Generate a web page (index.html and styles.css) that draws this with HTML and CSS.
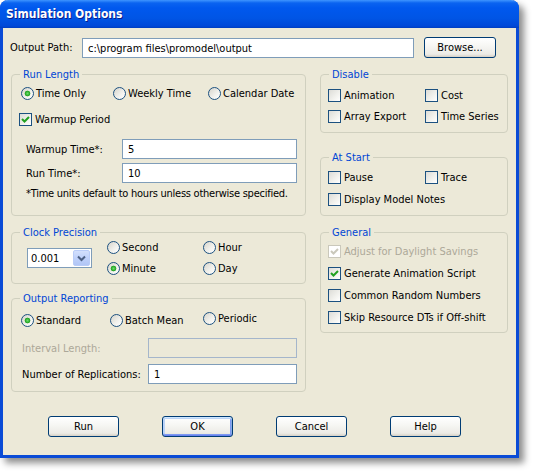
FILE: index.html
```html
<!DOCTYPE html>
<html>
<head>
<meta charset="utf-8">
<link rel="stylesheet" href="styles.css">
</head>
<body>
<div class="window">
  <div class="titlebar"><span class="title">Simulation Options</span></div>
  <div class="content">
    <div class="path-row">
      <span class="path-label">Output Path:</span>
      <input class="textbox path-input" type="text" value="c:\program files\promodel\output" readonly>
      <button class="btn browse">Browse...</button>
    </div>

    <div class="columns">
      <div class="col">
        <div class="group run-length">
          <div class="legend">Run Length</div>
          <div class="radio-row rl-radios">
            <span class="opt"><span class="radio on"></span>Time Only</span>
            <span class="opt"><span class="radio"></span>Weekly Time</span>
            <span class="opt"><span class="radio"></span>Calendar Date</span>
          </div>
          <div class="check-row warmup-row">
            <span class="opt"><span class="check on"><svg width="11" height="11" viewBox="0 0 11 11"><path d="M2 5 L4.5 7.5 L9 3" fill="none" stroke="#21A121" stroke-width="2"/></svg></span>Warmup Period</span>
          </div>
          <div class="field-row first-field">
            <span class="field-label">Warmup Time*:</span>
            <input class="textbox rl-input" type="text" value="5" readonly>
          </div>
          <div class="field-row">
            <span class="field-label">Run Time*:</span>
            <input class="textbox rl-input" type="text" value="10" readonly>
          </div>
          <div class="note">*Time units default to hours unless otherwise specified.</div>
        </div>

        <div class="group clock">
          <div class="legend">Clock Precision</div>
          <div class="clock-body">
            <div class="select">
              <span class="select-value">0.001</span>
              <span class="select-btn"><svg width="9" height="7" viewBox="0 0 9 7"><path d="M1 1.5 L4.5 5 L8 1.5" fill="none" stroke="#4D6185" stroke-width="2"/></svg></span>
            </div>
            <div class="clock-grid">
              <span class="opt"><span class="radio"></span>Second</span>
              <span class="opt"><span class="radio"></span>Hour</span>
              <span class="opt"><span class="radio on"></span>Minute</span>
              <span class="opt"><span class="radio"></span>Day</span>
            </div>
          </div>
        </div>

        <div class="group output">
          <div class="legend">Output Reporting</div>
          <div class="radio-row or-radios">
            <span class="opt"><span class="radio on"></span>Standard</span>
            <span class="opt"><span class="radio"></span>Batch Mean</span>
            <span class="opt periodic"><span class="radio"></span>Periodic</span>
          </div>
          <div class="or-field first-or">
            <span class="field-label disabled">Interval Length:</span>
            <input class="textbox or-input disabled-box" type="text" value="" readonly>
          </div>
          <div class="or-field">
            <span class="field-label">Number of Replications:</span>
            <input class="textbox or-input" type="text" value="1" readonly>
          </div>
        </div>
      </div>

      <div class="col">
        <div class="group disable">
          <div class="legend">Disable</div>
          <div class="check-grid">
            <span class="opt"><span class="check"></span>Animation</span>
            <span class="opt"><span class="check"></span>Cost</span>
            <span class="opt"><span class="check"></span>Array Export</span>
            <span class="opt"><span class="check"></span>Time Series</span>
          </div>
        </div>

        <div class="group atstart">
          <div class="legend">At Start</div>
          <div class="check-grid atstart-grid">
            <span class="opt"><span class="check"></span>Pause</span>
            <span class="opt"><span class="check"></span>Trace</span>
            <span class="opt span2"><span class="check"></span>Display Model Notes</span>
          </div>
        </div>

        <div class="group general">
          <div class="legend">General</div>
          <div class="check-list">
            <span class="opt disabled"><span class="check off-disabled"><svg width="11" height="11" viewBox="0 0 11 11"><path d="M2 5 L4.5 7.5 L9 3" fill="none" stroke="#CAC8BB" stroke-width="2"/></svg></span>Adjust for Daylight Savings</span>
            <span class="opt"><span class="check on"><svg width="11" height="11" viewBox="0 0 11 11"><path d="M2 5 L4.5 7.5 L9 3" fill="none" stroke="#21A121" stroke-width="2"/></svg></span>Generate Animation Script</span>
            <span class="opt"><span class="check"></span>Common Random Numbers</span>
            <span class="opt"><span class="check"></span>Skip Resource DTs if Off-shift</span>
          </div>
        </div>
      </div>
    </div>

    <div class="buttons">
      <button class="btn">Run</button>
      <button class="btn default">OK</button>
      <button class="btn">Cancel</button>
      <button class="btn">Help</button>
    </div>
  </div>
</div>
</body>
</html>
```

FILE: styles.css
```css
html, body {
  margin: 0;
  padding: 0;
  background: #FFFFFF;
}

body {
  font-family: "DejaVu Sans Condensed", "DejaVu Sans", sans-serif;
  font-size: 11px;
  color: #000000;
  min-height: 474px;
}

.window {
  width: 519px;
  height: 458px;
  box-sizing: border-box;
  background: #ECE9D8;
  border: 3px solid #0A4BD6;
  border-top: none;
  border-radius: 8px 8px 0 0;
  box-shadow: 5px 5px 7px rgba(0, 0, 0, 0.45);
  display: flex;
  flex-direction: column;
}

.titlebar {
  height: 28px;
  margin: 0 -3px;
  border-radius: 8px 8px 0 0;
  background: linear-gradient(to bottom, #3E95FF 0px, #0A63F0 3px, #0058EE 8px, #0055E5 18px, #0048D8 26px, #003DC0 28px);
  display: flex;
  align-items: center;
  padding-left: 6px;
  padding-bottom: 1px;
  box-sizing: border-box;
}

.title {
  color: #FFFFFF;
  font-weight: bold;
  font-size: 12px;
  text-shadow: 1px 1px 0 #0A1E8C;
}

.content {
  flex: 1;
  padding: 9px 8px 0 8px;
  display: flex;
  flex-direction: column;
}

/* path row */
.path-row {
  display: flex;
  align-items: flex-start;
  height: 21px;
}

.path-label {
  margin-left: -1px;
  width: 72px;
  line-height: 20px;
  margin-top: 1px;
}

.textbox {
  box-sizing: border-box;
  height: 20px;
  border: 1px solid #7F9DB9;
  background: #FFFFFF;
  font-family: inherit;
  font-size: 11px;
  color: #000000;
  padding: 0 0 0 5px;
  margin: 0;
  outline: none;
}

.path-input {
  width: 332px;
  margin-top: 1px;
}

.btn {
  box-sizing: border-box;
  height: 21px;
  width: 71px;
  padding: 0;
  margin: 0;
  border: 1px solid #003C74;
  border-radius: 3px;
  background: linear-gradient(to bottom, #FFFFFF 0%, #F7F7F4 40%, #ECEBE6 85%, #D6D0C5 100%);
  font-family: inherit;
  font-size: 11px;
  color: #000000;
}

.browse {
  width: 72px;
  margin-left: 10px;
}

.btn.default {
  box-shadow: inset 0 1px 0 #CEE7FF, inset 0 -1px 0 #6982EE, inset 1px 0 0 #B9D1FA, inset -1px 0 0 #89ADE4, inset 0 2px 0 #BCD4F6, inset 0 -2px 0 #7D99F1, inset 2px 0 0 #BCD4F6, inset -2px 0 0 #7D99F1;
}

/* columns */
.columns {
  display: grid;
  grid-template-columns: 295px 188px;
  column-gap: 14px;
  margin-top: 16px;
}

.col {
  display: flex;
  flex-direction: column;
}

.group {
  position: relative;
  box-sizing: border-box;
  border: 1px solid #D0D0BF;
  border-radius: 4px;
}

.legend {
  position: absolute;
  top: -7px;
  left: 8px;
  padding: 0 3px;
  background: #ECE9D8;
  color: #0046D5;
  line-height: 13px;
}

.opt {
  display: flex;
  align-items: center;
  height: 15px;
  white-space: nowrap;
}

.radio {
  box-sizing: border-box;
  width: 13px;
  height: 13px;
  border-radius: 50%;
  border: 1px solid #1C5180;
  background: linear-gradient(135deg, #D6D4CB 0%, #F2F2EE 60%, #FFFFFF 100%);
  margin-right: 2px;
  flex: none;
}

.radio.on {
  background: radial-gradient(circle at 50% 50%, #6BDD6B 0, #3EBA3E 1.5px, #21A121 2.5px, rgba(33, 161, 33, 0) 3.2px), linear-gradient(135deg, #D6D4CB 0%, #F2F2EE 60%, #FFFFFF 100%);
}

.check {
  box-sizing: border-box;
  width: 13px;
  height: 13px;
  border: 1px solid #1C5180;
  background: linear-gradient(135deg, #DCDCD7 0%, #F2F2EE 60%, #FFFFFF 100%);
  margin-right: 3px;
  flex: none;
  display: flex;
  align-items: center;
  justify-content: center;
}

.check.off-disabled {
  border-color: #CAC8BB;
  background: #FFFFFF;
}

.opt.disabled {
  color: #ACA899;
}

/* run length */
.run-length {
  height: 142px;
  padding: 11px 0 0 9px;
}

.radio-row {
  display: grid;
}

.rl-radios {
  grid-template-columns: 92px 95px auto;
}

.warmup-row {
  margin-top: 11px;
  margin-left: -2px;
}

.field-row {
  display: flex;
  align-items: center;
  margin-top: 4px;
  padding-left: 5px;
}

.field-row.first-field {
  margin-top: 12px;
}

.field-label {
  width: 96px;
}

.rl-input {
  width: 175px;
}

.note {
  margin-top: 4px;
  padding-left: 5px;
  line-height: 13px;
  white-space: nowrap;
  letter-spacing: -0.25px;
}

/* clock */
.clock {
  margin-top: 16px;
  height: 52px;
  padding: 7px 0 0 15px;
}

.clock-body {
  display: flex;
  align-items: center;
}

.select {
  box-sizing: border-box;
  width: 65px;
  height: 20px;
  border: 1px solid #7F9DB9;
  background: #FFFFFF;
  display: flex;
  align-items: center;
  padding: 1px;
}

.select-value {
  flex: 1;
  padding-left: 2px;
}

.select-btn {
  box-sizing: border-box;
  width: 17px;
  height: 16px;
  border: 1px solid #B9CCF8;
  border-radius: 2px;
  background: linear-gradient(to bottom, #D3E0FD 0%, #BFD1FB 50%, #B1C6F6 100%);
  display: flex;
  align-items: center;
  justify-content: center;
}

.clock-grid {
  display: grid;
  grid-template-columns: 96px auto;
  grid-template-rows: 15px 15px;
  row-gap: 6px;
  margin-left: 15px;
}

/* output reporting */
.output {
  margin-top: 14px;
  height: 94px;
  padding: 14px 0 0 9px;
}

.or-radios {
  grid-template-columns: 89px 93px auto;
}

.periodic {
  margin-top: -2px;
}

.or-field {
  display: flex;
  align-items: center;
  margin-top: 6px;
  padding-left: 1px;
}

.or-field.first-or {
  margin-top: 10px;
}

.or-field .field-label {
  width: 126px;
}

.field-label.disabled {
  color: #ACA899;
}

.or-input {
  width: 149px;
}

.disabled-box {
  background: #ECE9D8;
  border-color: #A5B6CB;
}

/* right column */
.disable {
  height: 59px;
  padding: 13px 0 0 7px;
}

.check-grid {
  display: grid;
  grid-template-columns: 97px auto;
  grid-template-rows: 15px 15px;
  row-gap: 6px;
}

.atstart {
  margin-top: 24px;
  height: 59px;
  padding: 12px 0 0 7px;
}

.atstart-grid {
  row-gap: 7px;
}

.span2 {
  grid-column: 1 / span 2;
}

.general {
  margin-top: 16px;
  height: 101px;
  padding: 11px 0 0 7px;
}

.check-list {
  display: grid;
  grid-template-rows: 15px 15px 15px 15px;
  row-gap: 7px;
}

/* bottom buttons */
.buttons {
  display: flex;
  gap: 43px;
  margin-top: 24px;
  padding-left: 37px;
}
```
